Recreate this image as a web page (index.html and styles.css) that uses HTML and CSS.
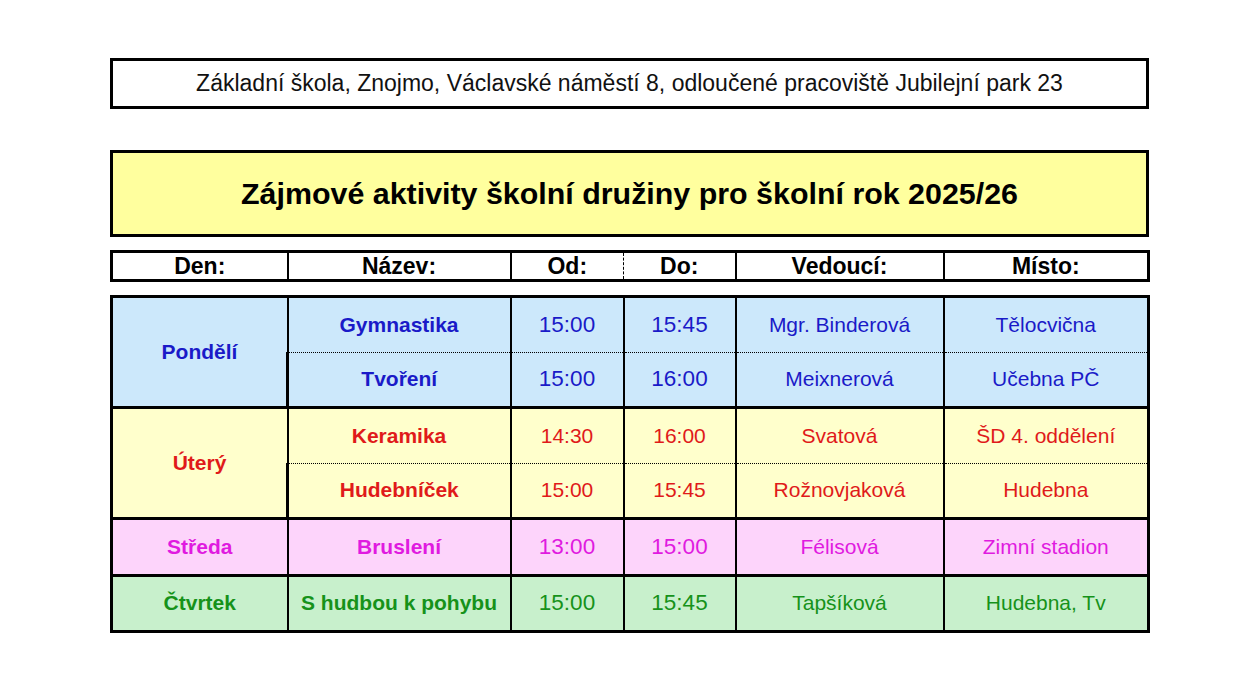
FILE: index.html
```html
<!DOCTYPE html>
<html lang="cs">
<head>
<meta charset="utf-8">
<title>Zájmové aktivity školní družiny</title>
<link rel="stylesheet" href="styles.css">
</head>
<body>
<div class="page">
  <div class="school">Základní škola, Znojmo, Václavské náměstí 8, odloučené pracoviště Jubilejní park 23</div>
  <div class="title">Zájmové aktivity školní družiny pro školní rok 2025/26</div>
  <table class="head">
    <colgroup><col class="c1"><col class="c2"><col class="c3"><col class="c4"><col class="c5"><col class="c6"></colgroup>
    <tr>
      <th>Den:</th><th>Název:</th><th class="od">Od:</th><th class="do">Do:</th><th>Vedoucí:</th><th>Místo:</th>
    </tr>
  </table>
  <table class="sched">
    <colgroup><col class="c1"><col class="c2"><col class="c3"><col class="c4"><col class="c5"><col class="c6"></colgroup>
    <tbody class="mon">
      <tr class="first dot">
        <td class="day" rowspan="2">Pondělí</td><td class="name">Gymnastika</td><td class="tm">15:00</td><td class="tm">15:45</td><td>Mgr. Binderová</td><td>Tělocvična</td>
      </tr>
      <tr>
        <td class="name">Tvoření</td><td class="tm">15:00</td><td class="tm">16:00</td><td>Meixnerová</td><td>Učebna PČ</td>
      </tr>
    </tbody>
    <tbody class="tue">
      <tr class="first dot">
        <td class="day" rowspan="2">Úterý</td><td class="name">Keramika</td><td>14:30</td><td>16:00</td><td>Svatová</td><td>ŠD 4. oddělení</td>
      </tr>
      <tr>
        <td class="name">Hudebníček</td><td>15:00</td><td>15:45</td><td>Rožnovjaková</td><td>Hudebna</td>
      </tr>
    </tbody>
    <tbody class="wed">
      <tr class="first">
        <td class="day">Středa</td><td class="name">Bruslení</td><td class="tm">13:00</td><td class="tm">15:00</td><td>Félisová</td><td>Zimní stadion</td>
      </tr>
    </tbody>
    <tbody class="thu">
      <tr class="first">
        <td class="day">Čtvrtek</td><td class="name">S hudbou k pohybu</td><td class="tm">15:00</td><td class="tm">15:45</td><td>Tapšíková</td><td>Hudebna, Tv</td>
      </tr>
    </tbody>
  </table>
</div>
</body>
</html>
```
FILE: styles.css
```css
html, body {
  margin: 0;
  padding: 0;
  background: #ffffff;
}
body {
  font-family: "Liberation Sans", Arial, sans-serif;
  color: #000;
}
.page {
  width: 1039px;
  margin-left: 110px;
  padding-top: 58px;
}
.school {
  box-sizing: border-box;
  height: 51px;
  border: 3px solid #000;
  display: flex;
  align-items: center;
  justify-content: center;
  font-size: 23px;
  color: #111;
}
.title {
  box-sizing: border-box;
  margin-top: 41px;
  height: 87px;
  border: 3px solid #000;
  background: #ffff9e;
  display: flex;
  align-items: center;
  justify-content: center;
  font-size: 30.4px;
  font-weight: bold;
  color: #000;
}
table {
  width: 1037px;
  border-collapse: collapse;
  table-layout: fixed;
}
.c1 { width: 176px; }
.c2 { width: 223px; }
.c3 { width: 113px; }
.c4 { width: 112px; }
.c5 { width: 208px; }
.c6 { width: 205px; }
.head {
  margin-top: 13px;
  border: 3px solid #000;
}
.head th {
  height: 26px;
  padding: 0;
  border-left: 2px solid #000;
  font-size: 23px;
  line-height: 26px;
  font-weight: bold;
  text-align: center;
  vertical-align: middle;
}
.head th:first-child { border-left: 3px solid #000; }
.head th.do { border-left: 1px dashed #000; }
.sched {
  margin-top: 13px;
  border: 3px solid #000;
}
.sched td {
  height: 53.5px;
  padding: 0;
  border-left: 2px solid #000;
  text-align: center;
  vertical-align: middle;
  font-size: 21px;
}
.sched td.tm { font-size: 22.5px; }
.sched td:first-child { border-left: 3px solid #000; }
.sched tr.first td { border-top: 3px solid #000; }
.sched tr.dot td:not(.day) { border-bottom: 1px dotted #000; }
.sched td.day,
.sched td.name {
  font-weight: bold;
  font-size: 21px;
}
.mon { background: #cce8fb; color: #1a1ac8; }
.tue { background: #ffffcc; color: #e01a1a; }
.wed { background: #fdd4fb; color: #e01ae0; }
.thu { background: #c8f0cc; color: #16921a; }
```
